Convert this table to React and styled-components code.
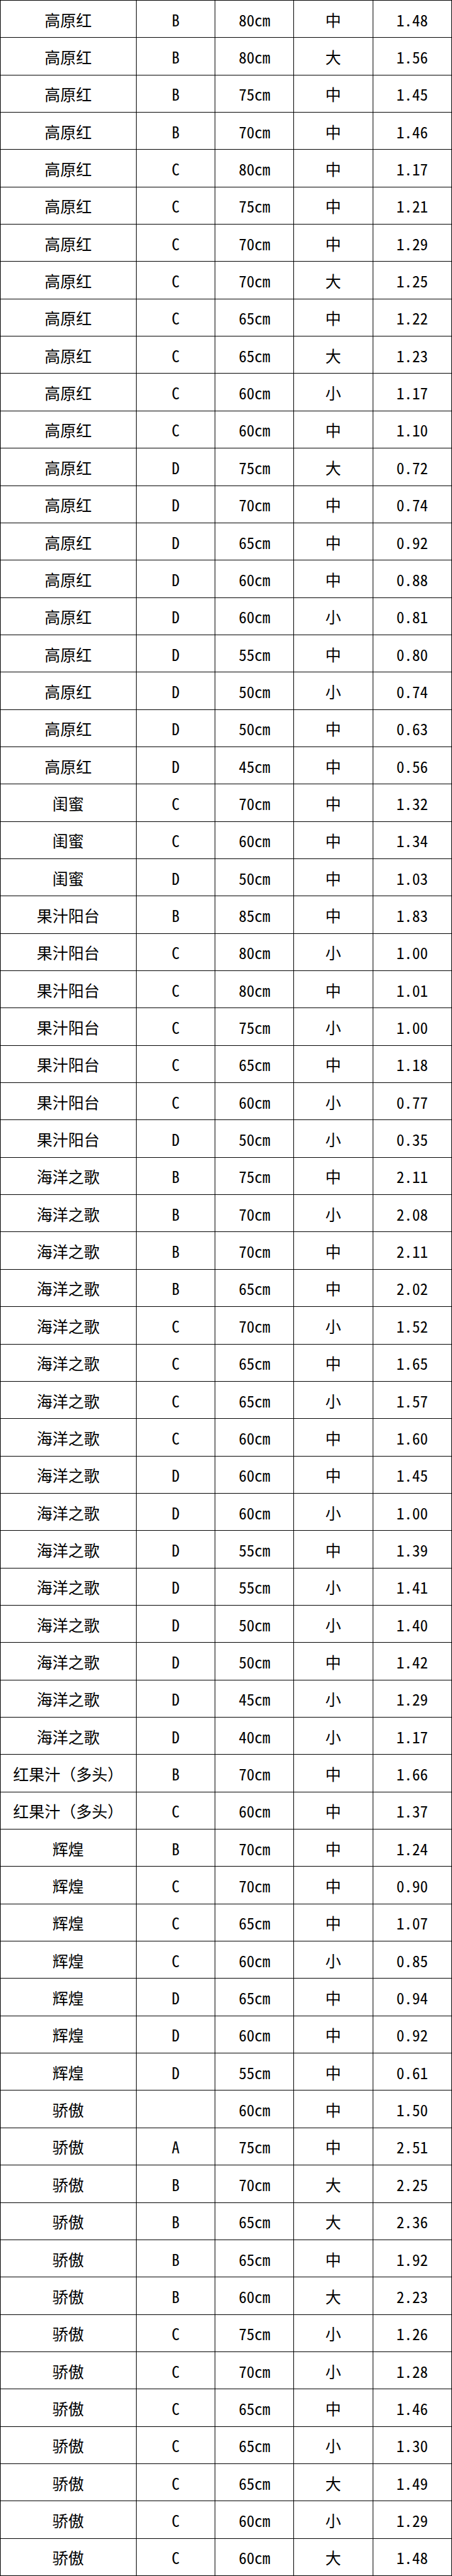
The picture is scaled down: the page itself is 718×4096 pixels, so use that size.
import React from 'react';
import styled, { createGlobalStyle } from 'styled-components';

const GlobalStyle = createGlobalStyle`
  html, body {
    margin: 0;
    padding: 0;
    background: #fff;
  }
  body {
    font-family: "Noto Sans Mono CJK SC", "Noto Sans CJK SC", sans-serif;
  }
`;

// 品种 / 等级 / 长度 / 花头 / 单价
const rows = [
  '高原红 B 80cm 中 1.48',
  '高原红 B 80cm 大 1.56',
  '高原红 B 75cm 中 1.45',
  '高原红 B 70cm 中 1.46',
  '高原红 C 80cm 中 1.17',
  '高原红 C 75cm 中 1.21',
  '高原红 C 70cm 中 1.29',
  '高原红 C 70cm 大 1.25',
  '高原红 C 65cm 中 1.22',
  '高原红 C 65cm 大 1.23',
  '高原红 C 60cm 小 1.17',
  '高原红 C 60cm 中 1.10',
  '高原红 D 75cm 大 0.72',
  '高原红 D 70cm 中 0.74',
  '高原红 D 65cm 中 0.92',
  '高原红 D 60cm 中 0.88',
  '高原红 D 60cm 小 0.81',
  '高原红 D 55cm 中 0.80',
  '高原红 D 50cm 小 0.74',
  '高原红 D 50cm 中 0.63',
  '高原红 D 45cm 中 0.56',
  '闺蜜 C 70cm 中 1.32',
  '闺蜜 C 60cm 中 1.34',
  '闺蜜 D 50cm 中 1.03',
  '果汁阳台 B 85cm 中 1.83',
  '果汁阳台 C 80cm 小 1.00',
  '果汁阳台 C 80cm 中 1.01',
  '果汁阳台 C 75cm 小 1.00',
  '果汁阳台 C 65cm 中 1.18',
  '果汁阳台 C 60cm 小 0.77',
  '果汁阳台 D 50cm 小 0.35',
  '海洋之歌 B 75cm 中 2.11',
  '海洋之歌 B 70cm 小 2.08',
  '海洋之歌 B 70cm 中 2.11',
  '海洋之歌 B 65cm 中 2.02',
  '海洋之歌 C 70cm 小 1.52',
  '海洋之歌 C 65cm 中 1.65',
  '海洋之歌 C 65cm 小 1.57',
  '海洋之歌 C 60cm 中 1.60',
  '海洋之歌 D 60cm 中 1.45',
  '海洋之歌 D 60cm 小 1.00',
  '海洋之歌 D 55cm 中 1.39',
  '海洋之歌 D 55cm 小 1.41',
  '海洋之歌 D 50cm 小 1.40',
  '海洋之歌 D 50cm 中 1.42',
  '海洋之歌 D 45cm 小 1.29',
  '海洋之歌 D 40cm 小 1.17',
  '红果汁（多头） B 70cm 中 1.66',
  '红果汁（多头） C 60cm 中 1.37',
  '辉煌 B 70cm 中 1.24',
  '辉煌 C 70cm 中 0.90',
  '辉煌 C 65cm 中 1.07',
  '辉煌 C 60cm 小 0.85',
  '辉煌 D 65cm 中 0.94',
  '辉煌 D 60cm 中 0.92',
  '辉煌 D 55cm 中 0.61',
  '骄傲 - 60cm 中 1.50',
  '骄傲 A 75cm 中 2.51',
  '骄傲 B 70cm 大 2.25',
  '骄傲 B 65cm 大 2.36',
  '骄傲 B 65cm 中 1.92',
  '骄傲 B 60cm 大 2.23',
  '骄傲 C 75cm 小 1.26',
  '骄傲 C 70cm 小 1.28',
  '骄傲 C 65cm 中 1.46',
  '骄傲 C 65cm 小 1.30',
  '骄傲 C 65cm 大 1.49',
  '骄傲 C 60cm 小 1.29',
  '骄傲 C 60cm 大 1.48'
].map(line => line.split(' ').map(v => (v === '-' ? '' : v)));

const PriceTable = () => (
  <Table $rows={rows.length}>
    {rows.map((cells, i) =>
      cells.map((text, j) => (
        <Cell key={`${i}-${j}`} $last={j === cells.length - 1}>
          {text}
        </Cell>
      ))
    )}
  </Table>
);

const App = () => (
  <>
    <GlobalStyle />
    <PriceTable />
  </>
);

const Table = styled.div`
  box-sizing: border-box;
  width: 718px;
  height: 4096px;
  display: grid;
  grid-template-columns: 325fr 189fr 188fr 189fr 189fr;
  grid-template-rows: repeat(${p => p.$rows}, 1fr);
  border-top: 1px solid #000;
  border-left: 1px solid #000;
  background: #fff;
`;

const Cell = styled.div`
  box-sizing: border-box;
  display: flex;
  align-items: center;
  justify-content: center;
  padding-top: 2px;
  border-right: 1px solid #000;
  border-bottom: 1px solid #000;
  font-size: 25px;
  line-height: 1;
  color: #000;
  white-space: nowrap;
  overflow: hidden;
`;

export default App;
